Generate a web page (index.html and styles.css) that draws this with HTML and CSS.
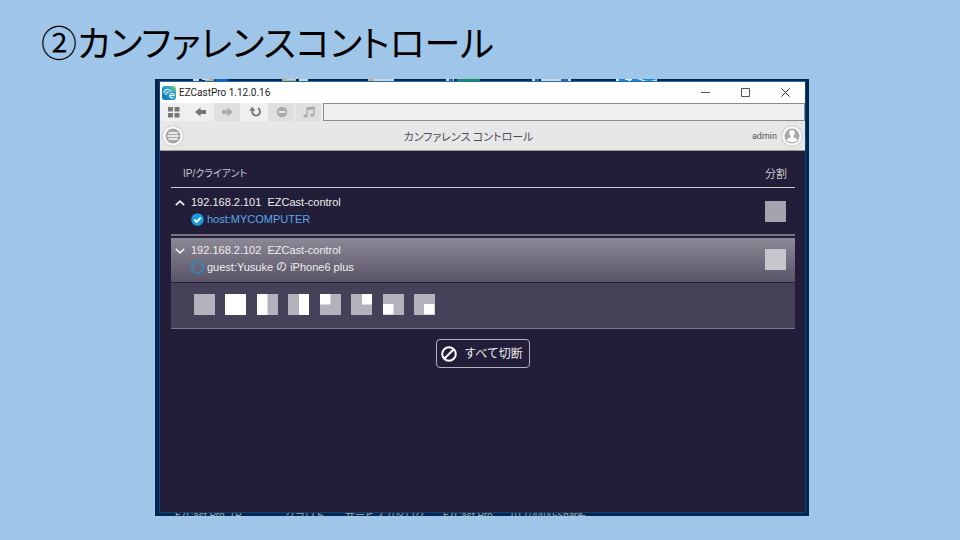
FILE: index.html
```
<!DOCTYPE html>
<html lang="ja">
<head>
<meta charset="utf-8">
<title>カンファレンスコントロール</title>
<link rel="stylesheet" href="styles.css">
</head>
<body>
<main class="slide">
<h1 class="slide-title">②カンファレンスコントロール</h1>
<div class="desktop">
  <div class="desktop-top" aria-hidden="true">
    <svg class="scraps" width="654" height="3" viewBox="0 0 654 3">
      <path fill="#c9b06a" d="M50 0h9v2h-9zM127 0h14v2h-14zM213 0h6v3h-6z"/>
      <path fill="#1262c4" d="M59 0h14v3h-12z"/>
      <path fill="#d3d6da" d="M38 0h6v2h-6zM47 0h7v1h-7zM132 0h8v1h-8zM144 0h9v2h-9zM219 0h20v2h-20zM291 0h8v3h-8zM377 0h6v3h-6zM386 0h30v2h-30z"/>
      <path fill="#2b63ad" d="M294 0h4v3h-4zM380 0h4v3h-4zM406 0h7v3h-7z"/>
      <path fill="#12944f" d="M302 0h23v3h-23z"/>
      <path fill="#1787cf" d="M461 0h41v3h-41z"/>
      <path fill="#dceaf5" d="M461 0h3v3h-3zM470 0h7v1h-7zM473 1h3v2h-3zM482 0h4q8 4 16 0v2h-14z"/>
    </svg>
  </div>
  <section class="window">
    <header class="titlebar">
      <svg class="app-icon" width="14" height="14" viewBox="0 0 14 14"><defs><linearGradient id="g" x1="1" y1="0" x2="0" y2="1"><stop stop-color="#b5d334"/><stop offset=".3" stop-color="#2aa9c9"/><stop offset="1" stop-color="#0873bd"/></linearGradient></defs><rect width="14" height="14" rx="3" fill="url(#g)"/><path d="M2 7.500Q2 3 6.500 3.500Q9 4 9.500 5.500M4 9Q4 5.500 7.500 6" fill="none" stroke="#d5f2fb" stroke-width="1.200"/><path d="M8 9.500h4.200a2.200 2.200 0 1 0-.8 1.900" fill="none" stroke="#fff" stroke-width="1.100"/></svg>
      <span class="app-name">EZCastPro 1.12.0.16</span>
      <div class="window-buttons">
        <button type="button" aria-label="最小化"><svg width="9" height="9" viewBox="0 0 9 9"><path d="M0 4.500h9" stroke="#555"/></svg></button>
        <button type="button" aria-label="最大化"><svg width="9" height="9" viewBox="0 0 9 9"><path d="M.5.5h8v8h-8z" fill="none" stroke="#555"/></svg></button>
        <button type="button" aria-label="閉じる"><svg width="9" height="9" viewBox="0 0 9 9"><path d="M.3.3l8.400 8.400M8.700.3L.3 8.700" stroke="#333"/></svg></button>
      </div>
    </header>
    <nav class="toolbar">
      <button type="button" aria-label="メニュー"><svg width="12" height="11" viewBox="0 0 12 11" fill="#777"><path d="M0 0h5v4.500H0zM6.500 0h5v4.500h-5zM0 6h5v4.500H0zM6.500 6h5v4.500h-5z"/></svg></button>
      <button type="button" aria-label="戻る"><svg width="12" height="10" viewBox="0 0 12 10"><path d="M0 5L5.500.5V3H11v4H5.500v2.500z" fill="#777"/></svg></button>
      <button type="button" class="off" aria-label="進む"><svg width="12" height="10" viewBox="0 0 12 10"><path d="M11 5L5.500.5V3H0v4h5.500v2.500z" fill="#aaa"/></svg></button>
      <button type="button" aria-label="更新"><svg width="13" height="12" viewBox="0 0 13 12"><path d="M3.300 4v2.500a3.900 3.900 0 1 0 5.600-4.300" fill="none" stroke="#777" stroke-width="1.900"/><path d="M3.300.8L6.300 4.800H.2z" fill="#777"/></svg></button>
      <button type="button" class="off" aria-label="停止"><svg width="12" height="12" viewBox="0 0 12 12"><circle cx="6" cy="6" r="5.300" fill="#aaa"/><path d="M2.500 6h7" stroke="#eee" stroke-width="1.800"/></svg></button>
      <button type="button" class="off" aria-label="音楽"><svg width="13" height="12" viewBox="0 0 13 12"><path d="M4 9.500V2l7-1v7.500M4 3.500l7-1" fill="none" stroke="#aaa" stroke-width="1.300"/><ellipse cx="2.500" cy="10" rx="2.200" ry="1.500" fill="#aaa"/><ellipse cx="9.500" cy="9" rx="2.200" ry="1.500" fill="#aaa"/></svg></button>
      <input class="address" type="text" aria-label="アドレス">
    </nav>
    <header class="page-bar">
      <button type="button" class="round" aria-label="一覧"><svg width="20" height="20" viewBox="0 0 20 20"><circle cx="10" cy="10" r="9.500" fill="#f9f9f9"/><circle cx="10" cy="10" r="6.900" fill="#aaa" stroke="#999"/><path d="M5.500 7h9M4.500 10h11M5.500 13h9" stroke="#fff" stroke-width="1.600"/></svg></button>
      <h2 class="page-title">カンファレンス コントロール</h2>
      <div class="account">
        <span>admin</span>
        <svg class="round" width="20" height="20" viewBox="0 0 20 20"><circle cx="10" cy="10" r="9.500" fill="#fafafa"/><circle cx="10" cy="10" r="7.500" fill="#aaa"/><path d="M10 4c-2 0-2.800 1.300-2.700 3 .1 1.500.7 2.500 1.400 3v1.300c-1.300.6-3.700 1-4 2.700 2.700 3 8 3 10.600 0-.3-1.700-2.700-2.100-4-2.700V10c.7-.5 1.300-1.500 1.400-3C12.800 5.300 12 4 10 4z" fill="#fff"/></svg>
      </div>
    </header>
    <div class="content">
      <table class="clients">
        <thead>
          <tr><th class="col-client">IP/クライアント</th><th class="col-split">分割</th></tr>
        </thead>
        <tbody class="host">
          <tr>
            <td>
              <div class="device">
                <button type="button" class="fold" aria-label="閉じる"><svg width="10" height="6" viewBox="0 0 10 6"><path d="M.8 5.200L5 1.200l4.200 4" fill="none" stroke="#eee" stroke-width="1.700"/></svg></button>
                <div>
                  <div class="ip">192.168.2.101&nbsp; EZCast-control</div>
                  <div class="name"><svg width="13" height="13" viewBox="0 0 13 13"><circle cx="6.500" cy="6.500" r="6.300" fill="#1b9ae0"/><path d="M3.300 6.600l2.300 2.300 4.200-4.300" fill="none" stroke="#fff" stroke-width="1.900"/></svg><span class="me">host:MYCOMPUTER</span></div>
                </div>
              </div>
            </td>
            <td class="cell-split"><button type="button" class="split" aria-label="分割"></button></td>
          </tr>
        </tbody>
        <tbody class="guest">
          <tr>
            <td>
              <div class="device">
                <button type="button" class="fold" aria-label="開く"><svg width="10" height="6" viewBox="0 0 10 6"><path d="M.8.8L5 4.800l4.200-4" fill="none" stroke="#eee" stroke-width="1.700"/></svg></button>
                <div>
                  <div class="ip">192.168.2.102&nbsp; EZCast-control</div>
                  <div class="name"><svg width="13" height="13" viewBox="0 0 13 13"><circle cx="6.500" cy="6.500" r="5.600" fill="none" stroke="#2590d0" stroke-width="1.400"/></svg><span>guest:Yusuke の iPhone6 plus</span></div>
                </div>
              </div>
            </td>
            <td class="cell-split"><button type="button" class="split light" aria-label="分割"></button></td>
          </tr>
        </tbody>
        <tbody class="layouts">
          <tr>
            <td colspan="2">
              <div class="tiles">
                <button type="button" class="tile" aria-label="なし"></button>
                <button type="button" class="tile full" aria-label="全画面"></button>
                <button type="button" class="tile left" aria-label="左半分"></button>
                <button type="button" class="tile right" aria-label="右半分"></button>
                <button type="button" class="tile quarter tl" aria-label="左上"></button>
                <button type="button" class="tile quarter tr" aria-label="右上"></button>
                <button type="button" class="tile quarter bl" aria-label="左下"></button>
                <button type="button" class="tile quarter br" aria-label="右下"></button>
              </div>
            </td>
          </tr>
        </tbody>
      </table>
      <button type="button" class="disconnect"><svg width="16" height="16" viewBox="0 0 16 16"><circle cx="8" cy="8" r="6.800" fill="none" stroke="#fff" stroke-width="2"/><path d="M12.500 3.500l-9 9" stroke="#fff" stroke-width="2"/></svg><span>すべて切断</span></button>
    </div>
  </section>
  <footer class="desktop-labels">
    <span>EZCast Pro_TP</span><span>クラウド</span><span>サービスカタログ</span><span>EZCast Pro</span><span>017/4400-Share-</span>
  </footer>
</div>
</main>
</body>
</html>
```

FILE: styles.css
```
* { box-sizing: border-box; }

body {
  margin: 0;
  min-height: 100vh;
  background: #9fc5e8;
  font-family: "Liberation Sans", "Noto Sans CJK JP", sans-serif;
  font-size: 11px;
}

button {
  padding: 0;
  border: 0;
  background: none;
  font: inherit;
  color: inherit;
}

svg { display: block; flex: none; }

.slide {
  display: flex;
  flex-direction: column;
  min-height: 100vh;
  padding: 15px 151px 24px 155px;
}

.slide-title {
  margin: 0 0 12px -114px;
  color: #000;
  font: 400 36px/52px "Noto Sans CJK JP", sans-serif;
  font-feature-settings: "palt";
  white-space: nowrap;
}

.desktop {
  flex: 1;
  display: flex;
  flex-direction: column;
  padding: 0 3px 0 4px;
  background: #02264f;
  overflow: hidden;
}

.desktop-top { height: 2px; overflow: hidden; }
.scraps { margin-left: -4px; }

.window {
  flex: 1;
  display: flex;
  flex-direction: column;
  border: 1px solid #0d4477;
  border-top-color: #1b73b5;
  background: #221d39;
}

.titlebar {
  display: flex;
  align-items: center;
  gap: 3px;
  height: 21px;
  padding: 0 2px;
  background: #fff;
}

.app-name { color: #222; font: 10px/20px Roboto, sans-serif; }
.window-buttons { display: flex; margin-left: auto; }
.window-buttons button {
  display: grid;
  place-items: center;
  width: 40px;
  height: 20px;
  padding-left: 5px;
}

.toolbar { display: flex; height: 18px; background: #efefef; }
.toolbar button {
  display: grid;
  place-items: center;
  width: 27px;
  padding-left: 2px;
  border-right: 1px solid #efefef;
}
.toolbar .off { background: #dfdfdf; }
.address {
  flex: 1;
  min-width: 0;
  margin-left: 1px;
  border: 1px solid #8c8c8c;
  background: #efefef;
}

.page-bar {
  display: grid;
  grid-template-columns: 1fr auto 1fr;
  align-items: center;
  height: 30px;
  padding: 0 3px;
  border-bottom: 1px solid #999;
  background: #e7e7e7;
  color: #555;
}
.round { width: 20px; border-radius: 50%; box-shadow: 0 0 2px #aaa; }
.page-title {
  margin: 0 28px 0 0;
  color: #514a5c;
  font: 400 11px/20px "Noto Sans CJK JP", sans-serif;
  font-feature-settings: "palt";
}
.account {
  display: flex;
  justify-content: flex-end;
  align-items: center;
  gap: 5px;
  font: 9px/20px Roboto, sans-serif;
}

.content {
  display: flex;
  flex-direction: column;
  align-items: center;
  gap: 10px;
  padding: 10px 10px 0 11px;
  color: #eee;
}

.clients { width: 100%; border-spacing: 0; }
.clients th {
  height: 27px;
  padding: 0;
  border-bottom: 1px solid #c9c7ce;
  color: #c8c6ce;
  font-weight: 400;
  font-feature-settings: "palt";
  line-height: 20px;
}
.clients .col-client { padding-left: 12px; font-size: 10px; text-align: left; }
.clients .col-split { width: 60px; padding-right: 8px; text-align: right; }
.clients td { padding: 0; }

.device { display: flex; gap: 6px; padding: 0 4px; }
.fold { align-self: flex-start; margin-top: 6px; }
.ip { height: 17px; line-height: 17px; }
.name { display: flex; align-items: center; gap: 3px; height: 17px; line-height: 17px; }
.name span { height: 17px; }
.me { color: #5aa9e6; }
.split {
  display: block;
  width: 21px;
  height: 21px;
  margin: 0 9px 0 auto;
  background: #a5a2ae;
}
.split.light { background: #c8c6cd; }

.clients .host td {
  height: 50px;
  padding-bottom: 2px;
  border-bottom: 2px solid #221d39;
  background: linear-gradient(#221d39, #221d39) top / 100% 46px no-repeat #75717f;
  background-clip: padding-box;
}
.clients .guest td { height: 45px; padding-bottom: 2px; border-bottom: 1px solid #221d39; }
.guest tr { background: linear-gradient(#8c8896, #585365); }
.clients .layouts td {
  height: 46px;
  padding: 0 22px 3px 23px;
  border-bottom: 1px solid #7b788a;
  background: #464158;
}

.tiles { display: flex; justify-content: space-between; max-width: 241px; }
.tile {
  width: 21px;
  height: 21px;
  background: linear-gradient(#fff, #fff) left top / 0 0 no-repeat #b4b1bd;
}
.full { background-size: 100% 100%; }
.left { background-size: 50% 100%; }
.right { background-size: 50% 100%; background-position: right; }
.quarter { background-size: 50% 50%; }
.tr { background-position: right top; }
.bl { background-position: left bottom; }
.br { background-position: right bottom; }

.disconnect {
  display: flex;
  align-items: center;
  gap: 7px;
  height: 29px;
  padding: 0 6px 0 4px;
  border: 1px solid #b5b2bd;
  border-radius: 4px;
  font-size: 12px;
  line-height: 16px;
}

.desktop-labels {
  display: grid;
  grid-template-columns: 110px 60px 98px 68px auto;
  height: 3px;
  padding-left: 16px;
  overflow: hidden;
  color: #aaa69f;
  font: 10px/6px Roboto, "Noto Sans CJK JP", sans-serif;
  white-space: nowrap;
}
```
